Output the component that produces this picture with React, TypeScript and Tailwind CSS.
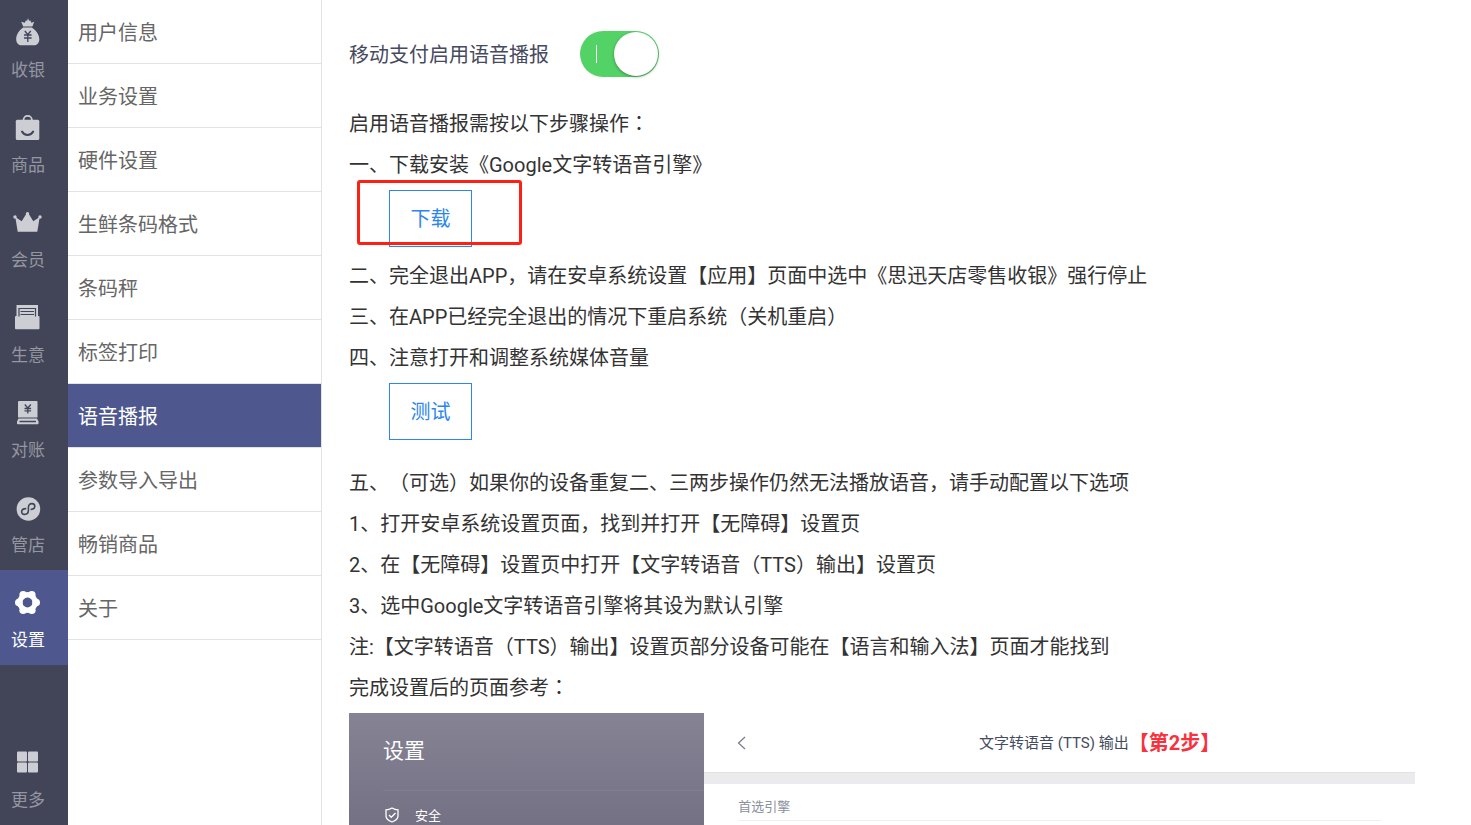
import type { ReactNode } from "react";

const navItems: { label: string; icon: ReactNode }[] = [
  {
    label: "收银",
    icon: (
      <svg viewBox="0 0 30 30" className="size-[30px]" fill="currentColor">
        <path d="M10.2 9.600 8.200 4.800l3.600 1 1.200-2.600 1 .8 1-2.800 1.200 2.800 1-.8 1.200 2.600 2.800-1-1.800 4.800z" />
        <path d="M10.200 10.600h8.600c4.600 3 7.800 7.800 7.500 12.200-.2 3.500-2.400 5.500-5.400 5.500H8.600c-3 0-5.200-2-5.400-5.500-.2-4.400 2.500-9.200 7-12.200z" />
        <path d="m11.800 14 3 3.500 3-3.500M11 18h7.600M11 21h7.600M14.800 17.500V25" fill="none" stroke="#424558" strokeWidth="1.300" />
      </svg>
    ),
  },
  {
    label: "商品",
    icon: (
      <svg viewBox="0 0 30 30" className="size-[30px]" fill="currentColor">
        <path d="M10.500 9V8a4.200 4.200 0 0 1 8.400 0v1" fill="none" stroke="currentColor" strokeWidth="1.800" />
        <rect x="2.800" y="7.800" width="23.500" height="20.200" rx="1.500" />
        <path d="M9 19.500c2.500 4.500 8.600 4.500 11.200 0" fill="none" stroke="#424558" strokeWidth="2" strokeLinecap="round" />
      </svg>
    ),
  },
  {
    label: "会员",
    icon: (
      <svg viewBox="0.500 0 30 30" className="size-[30px]" fill="currentColor">
        <path d="m2.800 10 6.400 4.200L14 6.500h2l4.800 7.700 6.400-4.200-2.400 14.800H5.200z" />
        <circle cx="15" cy="6.800" r="1.700" />
        <circle cx="2.500" cy="10" r="1.700" />
        <circle cx="27.500" cy="10" r="1.700" />
      </svg>
    ),
  },
  {
    label: "生意",
    icon: (
      <svg viewBox="0.500 0 30 30" className="size-[30px]" fill="currentColor">
        <path d="M4 3h21.500v11H4z" />
        <rect x="2.500" y="14" width="24.500" height="13.200" rx="1" />
        <path d="M6.500 14.500V6.500H23v8M8 9.500h13.500M8 12.500h13.500" fill="none" stroke="#424558" strokeWidth="1.200" />
      </svg>
    ),
  },
  {
    label: "对账",
    icon: (
      <svg viewBox="0.500 0 30 30" className="size-[30px]" fill="currentColor">
        <path d="M5.500 5q0-1 1-1h17.500q1 0 1 1v15.500H5.500z" />
        <path d="M6 21.500h18.500l1.500 3v2q0 .8-.8.8H5.300q-.8 0-.8-.8v-2z" />
        <path d="m12.300 7.500 3 3.500 3-3.500M12 11.500h6.600M12 13.800h6.600M15.300 11v5.500M7 24.500h16.500" fill="none" stroke="#424558" strokeWidth="1.300" />
      </svg>
    ),
  },
  {
    label: "管店",
    icon: (
      <svg viewBox="0 0 30 30" className="size-[30px]">
        <circle cx="15.400" cy="17" r="11.800" fill="currentColor" />
        <path
          d="M12.600 16.600c-5.200.2-5 6-1 5.800 2.500-.2 3.800-1.700 3.800-4v-2.800c0-2.800 1.600-4.200 3.700-4 3.800.4 3.600 5.600-.8 5.800"
          fill="none"
          stroke="#424558"
          strokeWidth="1.600"
          strokeLinecap="round"
        />
      </svg>
    ),
  },
  {
    label: "设置",
    icon: (
      <svg viewBox="0 0 30 30" className="size-[30px]" fill="currentColor">
        <circle cx="14.500" cy="15.500" r="7.700" fill="none" stroke="currentColor" strokeWidth="5.400" />
        <circle cx="23.200" cy="15.500" r="3.800" />
        <circle cx="5.800" cy="15.500" r="3.800" />
        <circle cx="18.800" cy="7.700" r="3.800" />
        <circle cx="10.200" cy="7.700" r="3.800" />
        <circle cx="18.800" cy="23.300" r="3.800" />
        <circle cx="10.200" cy="23.300" r="3.800" />
      </svg>
    ),
  },
];

const moreItem = {
  label: "更多",
  icon: (
    <svg viewBox="0.500 0 30 30" className="size-[30px]" fill="currentColor">
      <rect x="4.500" y="4.500" width="10" height="10" rx="1" />
      <rect x="15.500" y="4.500" width="10" height="10" rx="1" />
      <rect x="4.500" y="15.500" width="10" height="10" rx="1" />
      <rect x="15.500" y="15.500" width="10" height="10" rx="1" />
    </svg>
  ),
};

const menuItems = [
  "用户信息",
  "业务设置",
  "硬件设置",
  "生鲜条码格式",
  "条码秤",
  "标签打印",
  "语音播报",
  "参数导入导出",
  "畅销商品",
  "关于",
];

function NavButton({ label, icon, active }: { label: string; icon: ReactNode; active?: boolean }) {
  return (
    <button
      type="button"
      className={`flex h-[95px] w-full shrink-0 flex-col items-center gap-2 pt-[17px] pr-3 text-[17px] leading-[30px] ${
        active ? "bg-[#4e588f] text-white" : "text-[#9496a1]"
      }`}
    >
      <span className={active ? "text-white" : "text-[#cdced4]"}>{icon}</span>
      {label}
    </button>
  );
}

function ActionButton({ children }: { children: ReactNode }) {
  return (
    <button type="button" className="ml-10 block h-[57px] w-[83px] border border-[#2d86ee] pt-0.5 text-[#2d86ee]">
      {children}
    </button>
  );
}

// colon centred in its full-width cell
function Colon() {
  return <span className="font-['Noto_Sans_CJK_TC',sans-serif] leading-none">：</span>;
}

function SettingsPreview() {
  return (
    <figure className="mt-1 flex min-h-28">
      <div className="w-1/3 bg-linear-to-b from-[#868395] to-[#736f82] pl-[34px] text-white">
        <div className="flex h-[78px] items-center border-b border-white/5 text-[21px]">设置</div>
        <div className="flex h-12 items-center gap-[14px] text-[13px]">
          <svg viewBox="0 0 18 18" className="size-[18px]" fill="none" stroke="currentColor" strokeWidth="1.300">
            <path d="M9 2q3 1.800 6 1.800V10c0 3-3 4.800-6 6-3-1.200-6-3-6-6V3.800Q6 3.800 9 2z" />
            <path d="m6 9 2.300 2.300L12.500 7" />
          </svg>
          安全
        </div>
      </div>
      <div className="flex-1">
        <div className="flex h-[59px] items-center px-[30px]">
          <button type="button" aria-label="返回" className="text-[#777b88]">
            <svg viewBox="0 0 16 16" className="size-4" fill="none" stroke="currentColor" strokeWidth="1.200">
              <path d="M11 2 4.500 8l6.500 6" />
            </svg>
          </button>
          <div className="flex flex-1 items-center justify-center pt-0.5 pl-16 text-[15px] text-[#444b5d]">
            文字转语音 (TTS) 输出
            <strong className="text-xl leading-[41px] font-bold text-[#f9313c]">【第2步】</strong>
          </div>
        </div>
        <div className="h-3 border-t border-[#e2e2e5] bg-[#ebebee]" />
        <div className="mx-[34px] flex h-[37px] items-end border-b border-[#efeff1] pb-[3px] text-[13px] leading-5 text-[#8c909b]">
          首选引擎
        </div>
      </div>
    </figure>
  );
}

export default function App() {
  return (
    <div className="flex h-screen overflow-hidden bg-white font-['Roboto','Noto_Sans_CJK_SC',sans-serif] text-xl [text-spacing-trim:space-all]">
      <nav className="flex w-[68px] shrink-0 flex-col bg-[#424558]">
        {navItems.map((item) => (
          <NavButton key={item.label} {...item} active={item.label === "设置"} />
        ))}
        <div className="mt-auto">
          <NavButton {...moreItem} />
        </div>
      </nav>

      <aside className="w-[254px] shrink-0 border-r border-[#e2e2e2]">
        {menuItems.map((label) => (
          <button
            key={label}
            type="button"
            className={`block h-16 w-full border-b border-[#e2e2e2] px-[10px] pt-0.5 text-left ${
              label === "语音播报" ? "bg-[#4e588f] text-white" : "text-[#666666]"
            }`}
          >
            {label}
          </button>
        ))}
      </aside>

      <main className="min-w-0 flex-1 overflow-hidden pt-[31px] pr-14 pl-[27px] leading-[41px] text-[#333333]">
        <div className="mb-[27px] flex h-[46px] items-center gap-[31px]">
          <label htmlFor="voice" className="pt-0.5 text-[#464a5e]">
            移动支付启用语音播报
          </label>
          <input
            id="voice"
            type="checkbox"
            role="switch"
            defaultChecked
            className="relative h-[46px] w-[79px] appearance-none rounded-full bg-[#53d266] before:absolute before:top-[14px] before:left-4 before:h-[18px] before:w-px before:bg-white after:absolute after:top-px after:right-px after:size-11 after:rounded-full after:bg-white after:shadow-[0_1px_3px_rgba(0,0,0,0.35)]"
          />
        </div>

        <p>
          启用语音播报需按以下步骤操作
          <Colon />
        </p>
        <p>一、下载安装《Google文字转语音引擎》</p>
        <div className="relative mt-1 mb-[9px]">
          <ActionButton>下载</ActionButton>
          {/* highlight frame around the download step */}
          <div className="pointer-events-none absolute -top-[10px] left-2 h-[65px] w-[165px] rounded-[3px] border-3 border-[#ff2014]" />
        </div>
        <p>二、完全退出APP，请在安卓系统设置【应用】页面中选中《思迅天店零售收银》强行停止</p>
        <p>三、在APP已经完全退出的情况下重启系统（关机重启）</p>
        <p>四、注意打开和调整系统媒体音量</p>
        <div className="mt-1 mb-[23px]">
          <ActionButton>测试</ActionButton>
        </div>
        <p>五、（可选）如果你的设备重复二、三两步操作仍然无法播放语音，请手动配置以下选项</p>
        <p>1、打开安卓系统设置页面，找到并打开【无障碍】设置页</p>
        <p>2、在【无障碍】设置页中打开【文字转语音（TTS）输出】设置页</p>
        <p>3、选中Google文字转语音引擎将其设为默认引擎</p>
        <p>注:【文字转语音（TTS）输出】设置页部分设备可能在【语言和输入法】页面才能找到</p>
        <p>
          完成设置后的页面参考
          <Colon />
        </p>
        <SettingsPreview />
      </main>
    </div>
  );
}
